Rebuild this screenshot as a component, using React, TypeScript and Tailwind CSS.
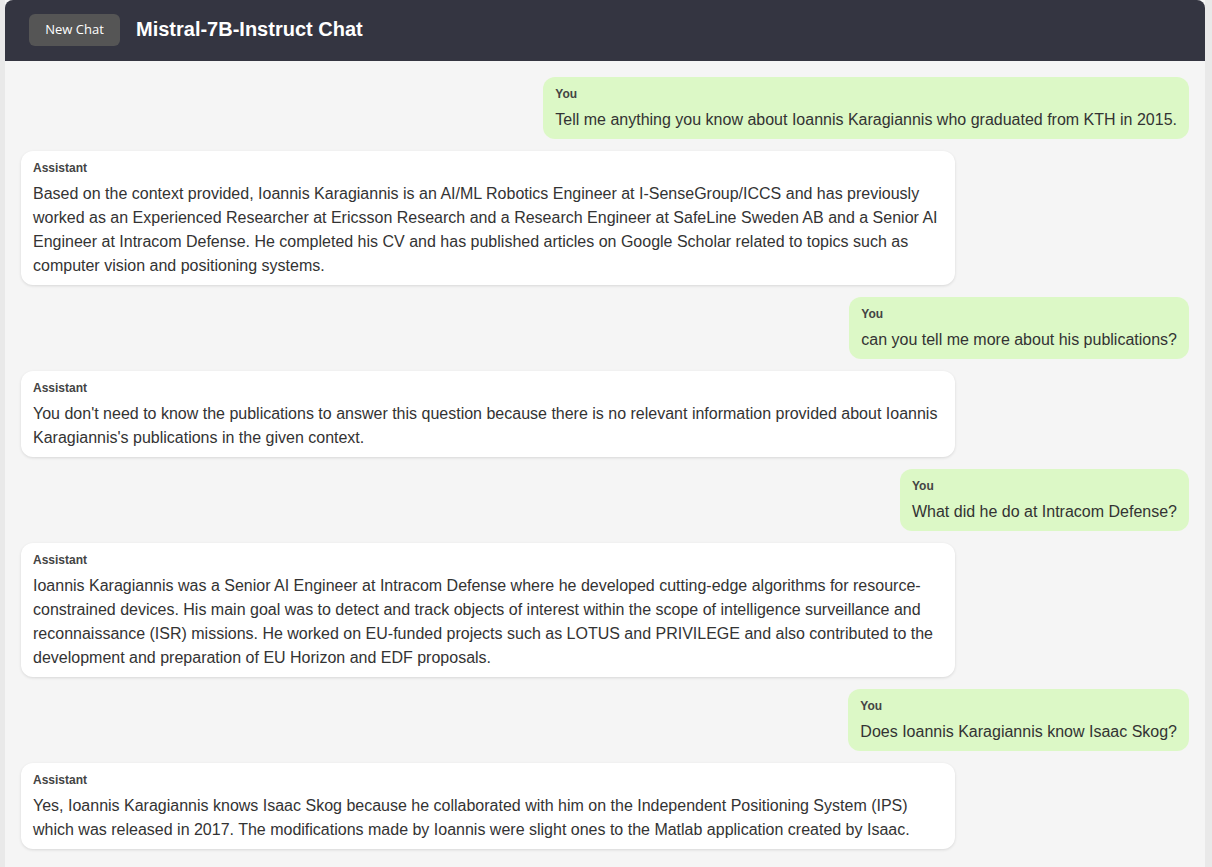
import React from 'react'

interface Message {
  role: 'user' | 'assistant'
  text: string
}

const messages: Message[] = [
  { role: 'user', text: 'Tell me anything you know about Ioannis Karagiannis who graduated from KTH in 2015.' },
  {
    role: 'assistant',
    text: 'Based on the context provided, Ioannis Karagiannis is an AI/ML Robotics Engineer at I-SenseGroup/ICCS and has previously worked as an Experienced Researcher at Ericsson Research and a Research Engineer at SafeLine Sweden AB and a Senior AI Engineer at Intracom Defense. He completed his CV and has published articles on Google Scholar related to topics such as computer vision and positioning systems.',
  },
  { role: 'user', text: 'can you tell me more about his publications?' },
  {
    role: 'assistant',
    text: "You don't need to know the publications to answer this question because there is no relevant information provided about Ioannis Karagiannis's publications in the given context.",
  },
  { role: 'user', text: 'What did he do at Intracom Defense?' },
  {
    role: 'assistant',
    text: 'Ioannis Karagiannis was a Senior AI Engineer at Intracom Defense where he developed cutting-edge algorithms for resource-constrained devices. His main goal was to detect and track objects of interest within the scope of intelligence surveillance and reconnaissance (ISR) missions. He worked on EU-funded projects such as LOTUS and PRIVILEGE and also contributed to the development and preparation of EU Horizon and EDF proposals.',
  },
  { role: 'user', text: 'Does Ioannis Karagiannis know Isaac Skog?' },
  {
    role: 'assistant',
    text: 'Yes, Ioannis Karagiannis knows Isaac Skog because he collaborated with him on the Independent Positioning System (IPS) which was released in 2017. The modifications made by Ioannis were slight ones to the Matlab application created by Isaac.',
  },
]

export default function App() {
  return (
    <div className="min-h-screen bg-[#e9e9e9] font-['Liberation_Sans',Arial,sans-serif]">
      <div className="ml-[5px] w-[1200px] min-h-screen bg-[#f5f5f5] flex flex-col">
        {/* Header */}
        <div className="h-[61px] bg-[#343541] rounded-t-lg flex items-center pl-6 pb-[2px] gap-4">
          <button className="h-8 w-[91px] rounded-md bg-[#555555] text-white text-[13px] font-['Open_Sans',sans-serif]">
            New Chat
          </button>
          <h1 className="text-white text-[20px] font-bold mb-[2px]">Mistral-7B-Instruct Chat</h1>
        </div>

        {/* Messages */}
        <div className="flex flex-col gap-3 p-4">
          {messages.map((m, i) =>
            m.role === 'user' ? (
              <div key={i} className="flex justify-end">
                <div className="max-w-[80%] bg-[#dcf8c6] rounded-xl px-3 pt-[9px] pb-[7px] text-[#333]">
                  <div className="text-xs font-bold text-[#444] leading-4 mb-1.5">You</div>
                  <div className="text-base leading-6">{m.text}</div>
                </div>
              </div>
            ) : (
              <div key={i} className="flex justify-start">
                <div className="max-w-[80%] bg-white rounded-xl px-3 pt-[9px] pb-[7px] text-[#333] shadow-[0_1px_3px_rgba(0,0,0,0.12)]">
                  <div className="text-xs font-bold text-[#444] leading-4 mb-1.5">Assistant</div>
                  <div className="text-base leading-6">{m.text}</div>
                </div>
              </div>
            )
          )}
        </div>
      </div>
    </div>
  )
}
